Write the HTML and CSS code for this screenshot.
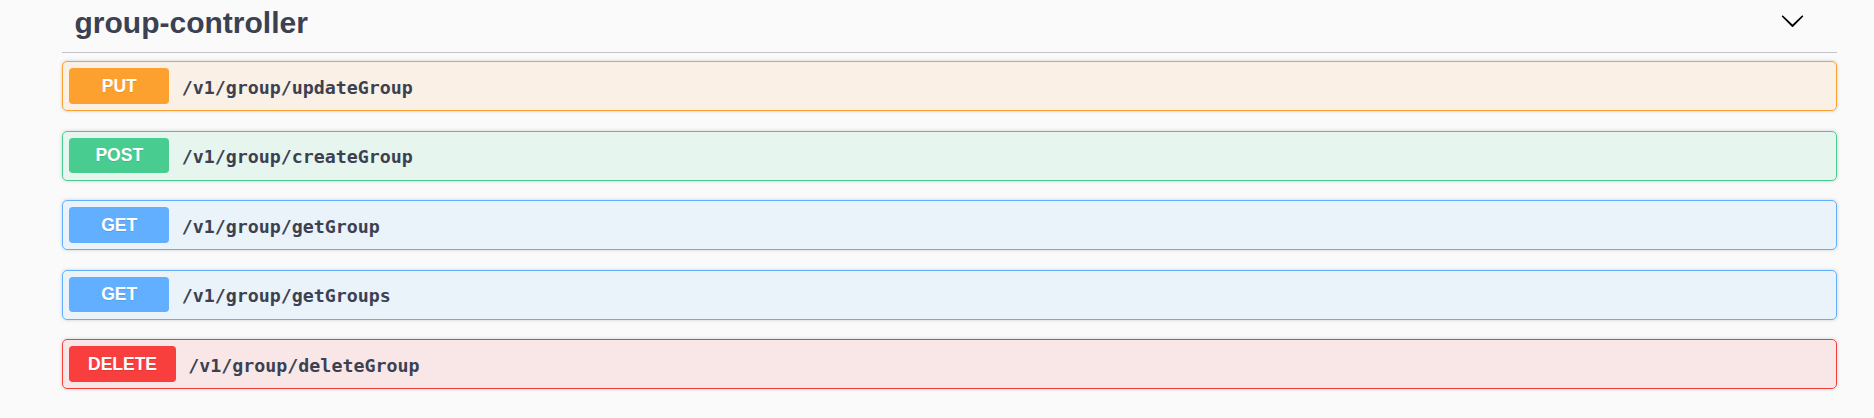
FILE: index.html
```html
<!DOCTYPE html>
<html lang="en">
<head>
<meta charset="utf-8">
<title>group-controller</title>
<link rel="stylesheet" href="styles.css">
</head>
<body>
<div class="wrapper">
  <h3 class="tag">
    <span class="tag-name">group-controller</span>
    <svg class="arrow" width="25" height="25" viewBox="0 0 20 20" aria-hidden="true">
      <path d="M17.418 6.109c.272-.268.709-.268.979 0s.271.701 0 .969l-7.908 7.830c-.27.268-.707.268-.979 0l-7.908-7.830c-.27-.268-.27-.701 0-.969.271-.268.709-.268.979 0L10 13.25l7.418-7.141z"/>
    </svg>
  </h3>
  <div class="ops">
    <div class="op op-put"><span class="method">PUT</span><span class="path">/v1/group/updateGroup</span></div>
    <div class="op op-post"><span class="method">POST</span><span class="path">/v1/group/createGroup</span></div>
    <div class="op op-get"><span class="method">GET</span><span class="path">/v1/group/getGroup</span></div>
    <div class="op op-get"><span class="method">GET</span><span class="path">/v1/group/getGroups</span></div>
    <div class="op op-delete"><span class="method">DELETE</span><span class="path">/v1/group/deleteGroup</span></div>
  </div>
</div>
</body>
</html>
```
FILE: styles.css
```css
html, body {
  margin: 0;
  padding: 0;
  background: #fafafa;
}

.wrapper {
  width: 1775px;
  margin-left: 62px;
}

.tag {
  display: flex;
  align-items: flex-start;
  justify-content: space-between;
  box-sizing: border-box;
  height: 53px;
  margin: 0 0 8px 0;
  padding: 6px 32px 0 12.5px;
  border-bottom: 1px solid #c2c4c9;
  color: #3b4151;
  font-family: "Liberation Sans", Arial, sans-serif;
  font-size: 30px;
  font-weight: 700;
}

.tag-name {
  line-height: 34px;
}

.arrow {
  margin-top: 1.5px;
  fill: #000;
}

.op {
  display: flex;
  align-items: center;
  box-sizing: border-box;
  height: 50px;
  margin-bottom: 19.5px;
  padding: 0 6.25px;
  border: 1px solid #000;
  border-radius: 5px;
  box-shadow: 0 0 3.75px rgba(0, 0, 0, 0.19);
}

.method {
  box-sizing: border-box;
  min-width: 100px;
  padding: 7.5px 18.75px;
  border-radius: 3.75px;
  color: #fff;
  font-family: "Liberation Sans", Arial, sans-serif;
  font-size: 17.5px;
  font-weight: 700;
  line-height: 20.5px;
  text-align: center;
  text-shadow: 0 1.25px 0 rgba(0, 0, 0, 0.1);
}

.path {
  padding: 2px 12.5px 0 12.5px;
  color: #3b4151;
  font-family: "DejaVu Sans Mono", "Liberation Mono", monospace;
  font-size: 18.3px;
  font-weight: 700;
}

.op-put { background: rgba(252, 161, 48, 0.1); border-color: #fca130; }
.op-put .method { background: #fca130; }

.op-post { background: rgba(73, 204, 144, 0.1); border-color: #49cc90; }
.op-post .method { background: #49cc90; }

.op-get { background: rgba(97, 175, 254, 0.1); border-color: #61affe; }
.op-get .method { background: #61affe; }

.op-delete { background: rgba(249, 62, 62, 0.1); border-color: #f93e3e; }
.op-delete .method { background: #f93e3e; }
```
